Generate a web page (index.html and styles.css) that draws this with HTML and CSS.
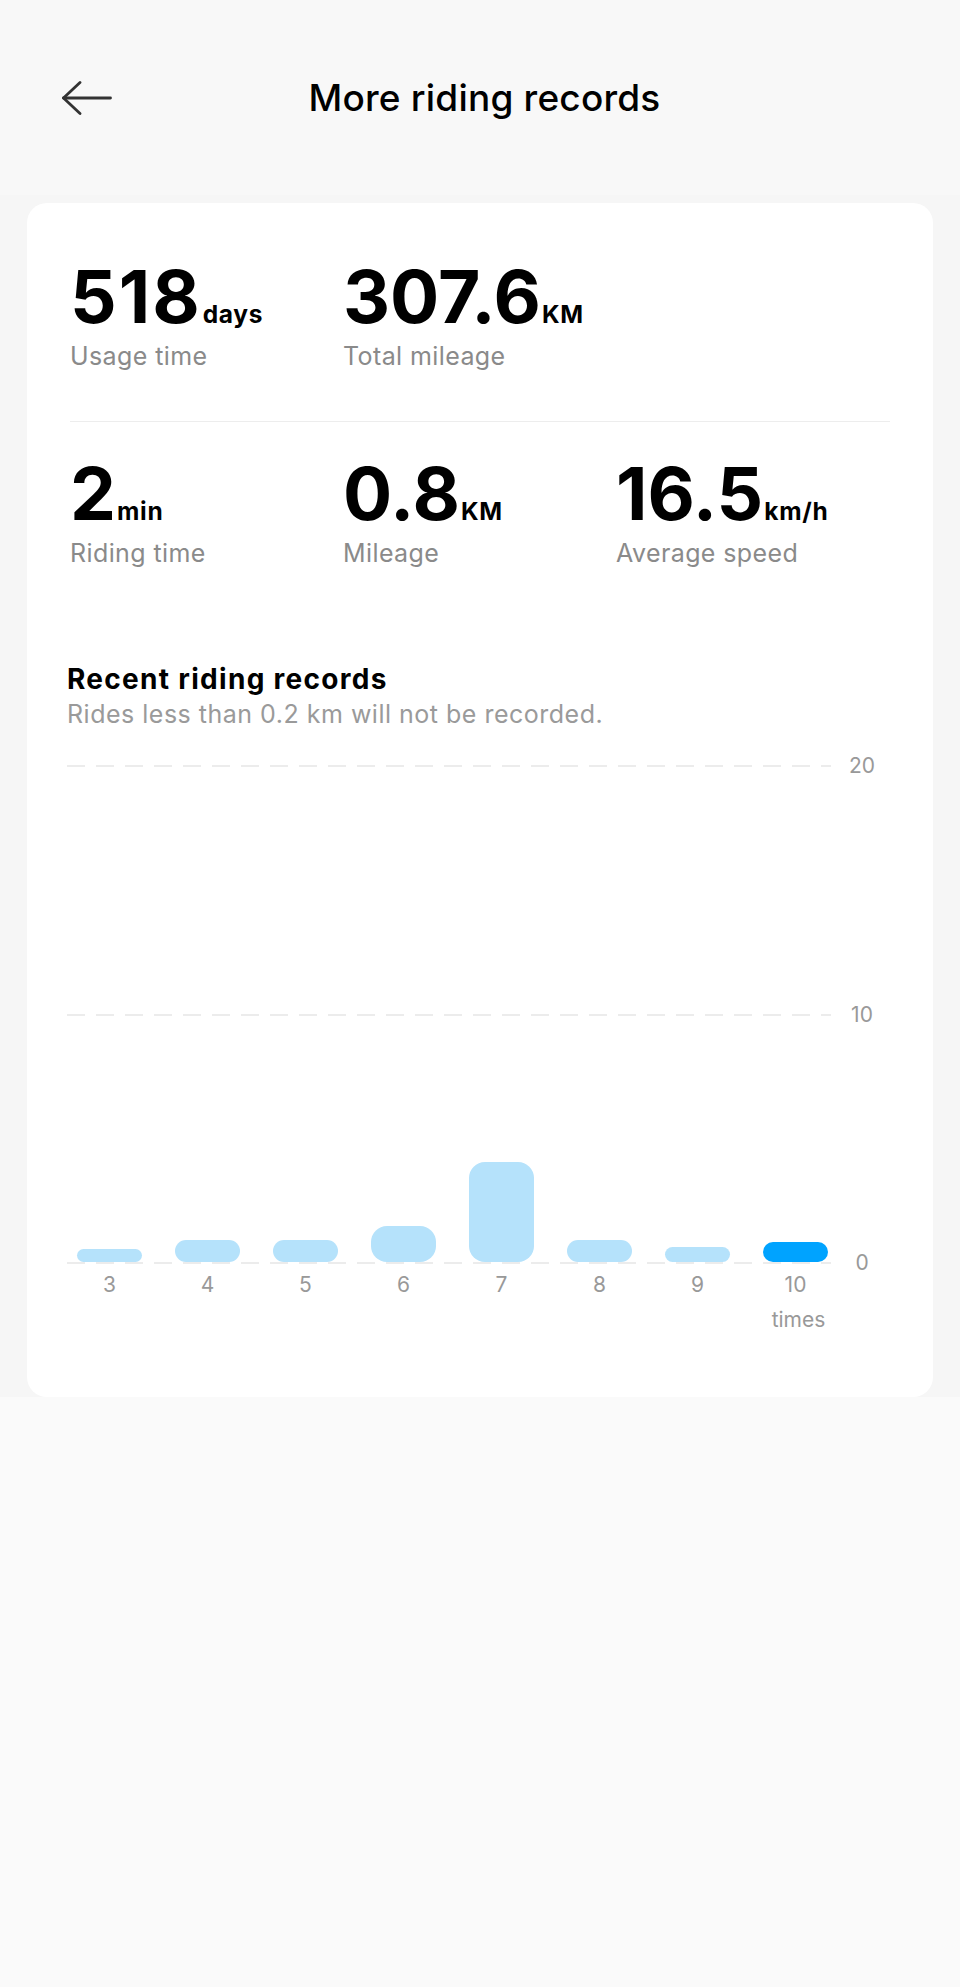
FILE: index.html
```html
<!DOCTYPE html>
<html lang="en">
<head>
<meta charset="utf-8">
<title>More riding records</title>
<link rel="stylesheet" href="styles.css">
</head>
<body>
<header class="topbar">
  <div class="back">
    <svg class="back-icon" width="50" height="34" viewBox="0 0 50 34" fill="none" stroke="#333" stroke-width="2.8" stroke-linecap="round" stroke-linejoin="round">
      <path d="M18 1.5 L1.5 17 L18 32.5"/>
      <path d="M1.5 17 H48.5"/>
    </svg>
  </div>
  <h1 class="title">More riding records</h1>
  <div class="spacer"></div>
</header>

<main class="main">
  <section class="card">
    <div class="stats">
      <div class="stat-row">
        <div class="stat">
          <div class="value"><span class="num num-wide">518</span><span class="unit">days</span></div>
          <div class="label">Usage time</div>
        </div>
        <div class="stat">
          <div class="value"><span class="num">307.6</span><span class="unit">KM</span></div>
          <div class="label">Total mileage</div>
        </div>
      </div>
      <div class="divider"></div>
      <div class="stat-row">
        <div class="stat">
          <div class="value"><span class="num">2</span><span class="unit">min</span></div>
          <div class="label">Riding time</div>
        </div>
        <div class="stat">
          <div class="value"><span class="num">0.8</span><span class="unit">KM</span></div>
          <div class="label">Mileage</div>
        </div>
        <div class="stat">
          <div class="value"><span class="num">16.5</span><span class="unit">km/h</span></div>
          <div class="label">Average speed</div>
        </div>
      </div>
    </div>

    <div class="records">
      <h2 class="rec-title">Recent riding records</h2>
      <p class="rec-sub">Rides less than 0.2 km will not be recorded.</p>

      <div class="chart">
        <div class="gridlines">
          <div class="gline"><div class="dash"></div><span class="ylabel">20</span></div>
          <div class="gline"><div class="dash"></div><span class="ylabel">10</span></div>
          <div class="gline"><div class="dash"></div><span class="ylabel">0</span></div>
        </div>
        <div class="bars">
          <div class="bar" style="height:13px"></div>
          <div class="bar" style="height:22px"></div>
          <div class="bar" style="height:22px"></div>
          <div class="bar" style="height:36px"></div>
          <div class="bar" style="height:100px"></div>
          <div class="bar" style="height:22px"></div>
          <div class="bar" style="height:15px"></div>
          <div class="bar active" style="height:20px"></div>
        </div>
      </div>

      <div class="xaxis">
        <span>3</span><span>4</span><span>5</span><span>6</span>
        <span>7</span><span>8</span><span>9</span><span>10</span>
        <span class="xunit">times</span>
      </div>
    </div>
  </section>
</main>
</body>
</html>
```

FILE: styles.css
```css
* { box-sizing: border-box; }

html, body {
  margin: 0;
  padding: 0;
}

body {
  background: #fafafa;
  font-family: "Inter", "Liberation Sans", Arial, sans-serif;
  color: #000;
  min-height: 1987px;
}

.topbar {
  height: 195px;
  background: #f8f8f8;
  display: grid;
  grid-template-columns: 1fr auto 1fr;
  align-items: center;
}

.back {
  padding-left: 62px;
  display: flex;
  align-items: center;
}

.back-icon { display: block; }

.title {
  margin: 0;
  padding-left: 9px;
  font-size: 37px;
  font-weight: 500;
  letter-spacing: 0.2px;
  line-height: 44px;
}

.main {
  background: #f6f6f6;
  padding: 8px 27px 0;
}

.card {
  background: #fff;
  border-radius: 20px;
  padding: 58px 40px 65px;
}

.stats {
  padding: 0 3px;
}

.stat-row {
  display: flex;
}

.stat {
  width: 273px;
}

.value {
  display: flex;
  align-items: baseline;
  line-height: 72px;
  height: 72px;
}

.num {
  font-size: 73px;
  font-weight: 700;
}

.num-wide {
  letter-spacing: 2px;
}

.unit {
  font-size: 24.5px;
  font-weight: 700;
  letter-spacing: 0.7px;
  margin-left: 1px;
}

.label {
  margin-top: 8px;
  font-size: 25px;
  line-height: 30px;
  letter-spacing: 0.4px;
  color: #8a8a8a;
}

.divider {
  height: 1px;
  background: #ededed;
  margin: 50px 0 36px;
}

.records {
  margin-top: 95px;
}

.rec-title {
  margin: 0;
  font-size: 28px;
  line-height: 32px;
  font-weight: 700;
  letter-spacing: 1.3px;
}

.rec-sub {
  margin: 4px 0 0;
  font-size: 25px;
  line-height: 30px;
  letter-spacing: 0.5px;
  color: #9a9a9a;
}

.chart {
  margin-top: 27px;
  display: grid;
  height: 517px;
}

.gridlines {
  grid-area: 1 / 1;
  display: flex;
  flex-direction: column;
  justify-content: space-between;
}

.gline {
  height: 20px;
  display: flex;
  align-items: center;
  gap: 16px;
}

.dash {
  width: 764px;
  height: 2px;
  background-image: repeating-linear-gradient(to right, #ececec 0 18px, transparent 18px 29px);
}

.ylabel {
  width: 30px;
  text-align: center;
  font-size: 21px;
  line-height: 20px;
  color: #999;
}

.bars {
  grid-area: 1 / 1;
  align-self: end;
  display: flex;
  align-items: flex-end;
  gap: 33px;
  padding-left: 10px;
  margin-bottom: 11px;
}

.bar {
  width: 65px;
  background: #b5e2fb;
  border-radius: 16px;
}

.bar.active {
  background: #00a3ff;
}

.xaxis {
  display: grid;
  grid-template-columns: repeat(8, 65px);
  column-gap: 33px;
  row-gap: 11px;
  padding-left: 10px;
  font-size: 21px;
  line-height: 24px;
  color: #999;
  text-align: center;
}

.xunit {
  grid-column: 8;
  padding-left: 6px;
}
```
